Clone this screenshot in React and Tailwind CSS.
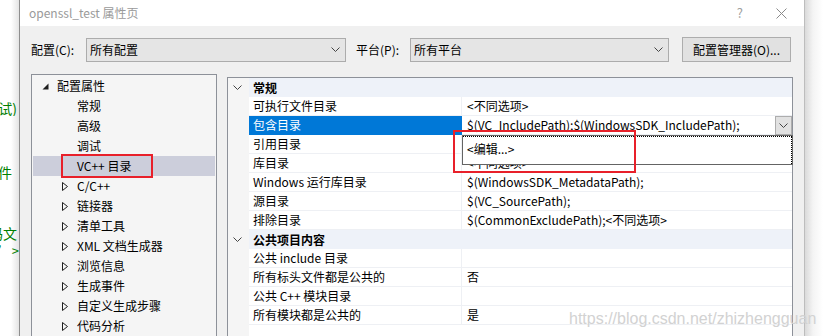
import React from 'react'

const TREE = [
  { label: '配置属性', level: 0, open: true },
  { label: '常规', level: 1 },
  { label: '高级', level: 1 },
  { label: '调试', level: 1 },
  { label: 'VC++ 目录', level: 1, selected: true },
  { label: 'C/C++', level: 1, collapsed: true },
  { label: '链接器', level: 1, collapsed: true },
  { label: '清单工具', level: 1, collapsed: true },
  { label: 'XML 文档生成器', level: 1, collapsed: true },
  { label: '浏览信息', level: 1, collapsed: true },
  { label: '生成事件', level: 1, collapsed: true },
  { label: '自定义生成步骤', level: 1, collapsed: true },
  { label: '代码分析', level: 1, collapsed: true },
]

const ROWS = [
  { cat: '常规' },
  { name: '可执行文件目录', value: '<不同选项>' },
  { name: '包含目录', value: '$(VC_IncludePath);$(WindowsSDK_IncludePath);', selected: true },
  { name: '引用目录', value: '<不同选项>' },
  { name: '库目录', value: '<不同选项>' },
  { name: 'Windows 运行库目录', value: '$(WindowsSDK_MetadataPath);' },
  { name: '源目录', value: '$(VC_SourcePath);' },
  { name: '排除目录', value: '$(CommonExcludePath);<不同选项>' },
  { cat: '公共项目内容' },
  { name: '公共 include 目录', value: '' },
  { name: '所有标头文件都是公共的', value: '否' },
  { name: '公共 C++ 模块目录', value: '' },
  { name: '所有模块都是公共的', value: '是' },
  { name: '', value: '', empty: true },
]

function Chevron({ className = '' }) {
  return (
    <svg width="9" height="5" viewBox="0 0 9 5" className={className}>
      <path d="M0.5 0.5 L4.5 4.5 L8.5 0.5" fill="none" stroke="#444" strokeWidth="1" />
    </svg>
  )
}

function Combo({ text, width }) {
  return (
    <div className={`flex h-[24px] items-center justify-between border border-[#acacac] bg-[#e5e5e5] pl-[3px] pr-[5px] ${width}`}>
      <span>{text}</span>
      <Chevron />
    </div>
  )
}

export default function App() {
  return (
    <div className="relative flex h-[336px] w-[823px] overflow-hidden bg-white font-['Noto_Sans_CJK_SC','Noto_Sans',sans-serif] text-[12px] text-black">
      {/* editor behind the dialog */}
      <div className="flex w-[19px] shrink-0 flex-col bg-[linear-gradient(to_right,#ffffff_0px,#ffffff_11px,#e4e4e4_19px)] text-[14px] leading-[16px] text-[#008000]">
        <div className="mt-[100px] flex h-[16px] justify-end overflow-hidden pr-[2px] whitespace-nowrap">调试)</div>
        <div className="mt-[48px] flex h-[16px] justify-end overflow-hidden pr-[7px] whitespace-nowrap">条件</div>
        <div className="mt-[45px] flex h-[16px] justify-end overflow-hidden pr-[2px] whitespace-nowrap">编码文</div>
        <div className="mt-[2px] flex h-[16px] justify-end overflow-hidden pr-[0px] text-[13px] whitespace-nowrap">” &gt;</div>
      </div>

      {/* dialog */}
      <div className="flex w-[786px] shrink-0 flex-col border-x border-l-[#8e8e8e] border-r-[#bdbdbd]">
        <div className="flex h-[26px] shrink-0 items-center bg-white pl-[9px] text-[#9a9a9a]">
          <span className="text-[12px]">openssl_test 属性页</span>
          <span className="ml-auto text-[13px] text-[#a0a0a0]">?</span>
          <svg width="11" height="11" viewBox="0 0 11 11" className="mr-[17px] ml-[33px]">
            <path d="M0.5 0.5 L10.5 10.5 M10.5 0.5 L0.5 10.5" stroke="#8a8a8a" strokeWidth="1" />
          </svg>
        </div>

        <div className="flex flex-1 flex-col bg-[#f0f0f0] px-[11px] pt-[11px]">
          <div className="flex h-[25px] items-center">
            <span className="w-[55px]">配置(C):</span>
            <Combo text="所有配置" width="w-[260px]" />
            <span className="ml-[10px] w-[54px]">平台(P):</span>
            <Combo text="所有平台" width="w-[259px]" />
            <div className="ml-[13px] flex h-[25px] w-[109px] items-center justify-center border border-[#adadad] bg-[#e1e1e1]">
              配置管理器(O)...
            </div>
          </div>

          <div className="mt-[12px] flex flex-1 gap-[10px] overflow-hidden">
            {/* tree */}
            <div className="flex w-[186px] shrink-0 flex-col border border-[#8d9199] bg-[#f5f5f5] px-px pt-[1px]">
              {TREE.map((t) => (
                <div
                  key={t.label}
                  className={`flex h-[20px] shrink-0 items-center ${t.selected ? 'bg-[#cccedb]' : ''} ${t.level === 0 ? 'pl-[9px]' : 'pl-[29px]'}`}
                >
                  {t.open && (
                    <svg width="7" height="7" viewBox="0 0 7 7" className="mr-[8px]">
                      <polygon points="6.5,0.5 6.5,6.5 0.5,6.5" fill="#1e1e1e" />
                    </svg>
                  )}
                  {t.collapsed ? (
                    <svg width="6" height="9" viewBox="0 0 6 9" className="mr-[9px]">
                      <path d="M0.5 0.5 L5.5 4.5 L0.5 8.5 Z" fill="none" stroke="#1e1e1e" strokeWidth="1" />
                    </svg>
                  ) : (
                    t.level === 1 && <span className="w-[15px]" />
                  )}
                  <span className="whitespace-nowrap">{t.label}</span>
                </div>
              ))}
            </div>

            {/* property grid */}
            <div className="mt-[3px] flex w-[566px] shrink-0 flex-col border border-[#8d9199] bg-white">
              {ROWS.map((r, i) =>
                r.cat ? (
                  <div key={i} className="flex h-[19px] shrink-0">
                    <div className="flex w-[21px] items-center justify-center bg-[#f5f5f5] pr-[3px]">
                      <Chevron />
                    </div>
                    <div className="flex flex-1 items-center bg-[#eef2f9] pl-[4px] font-bold">{r.cat}</div>
                  </div>
                ) : (
                  <div key={i} className={`flex shrink-0 ${r.empty ? 'flex-1' : 'h-[19px]'}`}>
                    <div className="w-[21px] bg-[#f5f5f5]" />
                    {!r.empty && (
                      <>
                        <div
                          className={`flex w-[213px] items-center border-r border-b pl-[4px] whitespace-nowrap ${
                            r.selected ? 'border-[#0078d7] bg-[#0078d7] text-white' : 'border-[#eef0f4]'
                          }`}
                        >
                          {r.name}
                        </div>
                        <div className="flex flex-1 items-center border-b border-[#eef0f4] pl-[5px] whitespace-nowrap">
                          <span>{r.value}</span>
                          {r.selected && (
                            <div className="ml-auto flex h-[19px] w-[17px] items-center justify-center border border-[#adadad] bg-[#e1e1e1]">
                              <Chevron />
                            </div>
                          )}
                        </div>
                      </>
                    )}
                  </div>
                )
              )}
            </div>
          </div>
        </div>
      </div>

      {/* window shadow on the right */}
      <div className="w-[18px] shrink-0 bg-[linear-gradient(to_right,#dadada_0px,#f4f4f4_8px,#ffffff_18px)]" />

      {/* open edit dropdown */}
      <div className="absolute top-[135px] left-[462px] h-[30px] w-[331px] border border-[#646464] bg-white">
        <div className="h-full border-t border-r border-dotted border-black pt-[3px] pl-[4px]">&lt;编辑...&gt;</div>
      </div>

      {/* annotations */}
      <div className="absolute top-[154px] left-[61px] h-[24px] w-[92px] border-2 border-[#e8202a]" />
      <div className="absolute top-[130px] left-[453px] h-[43px] w-[183px] border-2 border-[#e8202a]" />

      {/* watermark */}
      <div className="absolute top-[307px] left-[569px] font-['Liberation_Sans',sans-serif] text-[16px] whitespace-nowrap text-[#d2d2d2]">
        https://blog.csdn.net/zhizhengguan
      </div>
    </div>
  )
}
